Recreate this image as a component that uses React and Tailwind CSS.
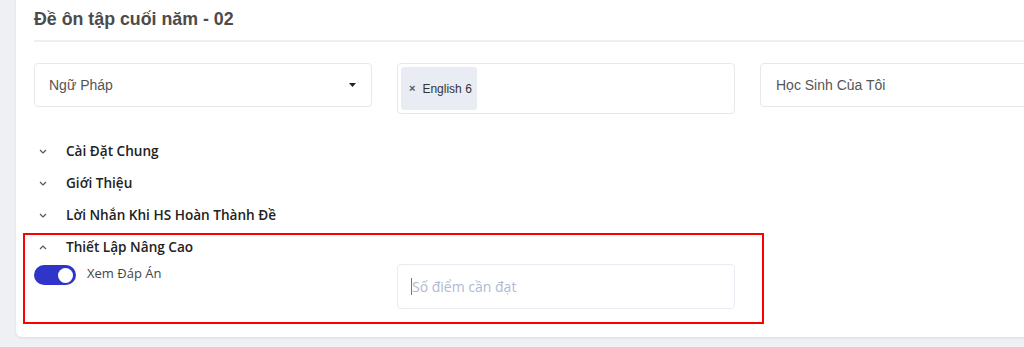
import { useState } from 'react';

const sections = ['Cài Đặt Chung', 'Giới Thiệu', 'Lời Nhắn Khi HS Hoàn Thành Đề'];

function Chevron({ up }) {
  return (
    <svg width="8" height="5" viewBox="0 0 8 5" className="ml-[5px]">
      <polyline
        points={up ? '1,4 4,1 7,4' : '1,1 4,4 7,1'}
        fill="none"
        stroke="#555"
        strokeWidth="1.2"
      />
    </svg>
  );
}

export default function App() {
  const [showAnswer, setShowAnswer] = useState(true);

  return (
    <div className="w-full h-[347px] overflow-hidden bg-[#eef0f4]">
      <div className="ml-4 w-[1040px] h-[337px] bg-white rounded-b-md shadow-[0_1px_3px_rgba(0,0,0,0.08)] pl-[18px]">
        {/* Header */}
        <h1 className="pt-[6px] h-[36px] leading-[26px] text-[17.8px] font-bold text-[#4b4b4b] font-['Liberation_Sans',Arial,sans-serif]">
          Đề ôn tập cuối năm - 02
        </h1>
        <div className="mt-[4px] h-[2px] bg-[#eceef2]" />

        {/* Filters */}
        <div className="mt-[21px] flex items-start gap-[25px] font-['Liberation_Sans',Arial,sans-serif] text-[14px] text-[#555]">
          <div className="shrink-0 w-[338px] h-[44px] border border-[#e6e8ee] rounded-[4px] flex items-center justify-between pl-[14px] pr-[15px]">
            <span>Ngữ Pháp</span>
            <svg width="7" height="4" viewBox="0 0 7 4">
              <polygon points="0,0 7,0 3.5,4" fill="#222" />
            </svg>
          </div>
          <div className="shrink-0 w-[338px] h-[51px] border border-[#e6e8ee] rounded-[4px] p-[3px]">
            <div className="h-[43px] w-[76px] bg-[#e9ecf2] rounded-[3px] flex items-center pl-[8px] gap-[7px] text-[12px] text-[#333]">
              <span className="text-[11px] font-bold text-[#555]">×</span>
              <span className="whitespace-nowrap">English 6</span>
            </div>
          </div>
          <div className="shrink-0 w-[320px] h-[44px] border border-[#e6e8ee] rounded-[4px] flex items-center pl-[15px]">
            <span>Học Sinh Của Tôi</span>
          </div>
        </div>

        {/* Accordion */}
        <div className="mt-[21px] font-['Open_Sans',sans-serif]">
          {sections.map((s) => (
            <div key={s} className="h-8 flex items-center">
              <span className="w-8 flex"><Chevron /></span>
              <span className="text-[13.6px] font-semibold text-[#222]">{s}</span>
            </div>
          ))}

          <div className="mt-[2px] -ml-[11px] w-[741px] h-[91px] border-2 border-[#ff0000] pl-[9px]">
            <div className="h-6 flex items-center">
              <span className="w-8 flex"><Chevron up /></span>
              <span className="text-[13.6px] font-semibold text-[#222]">Thiết Lập Nâng Cao</span>
            </div>
            <div className="mt-[5px] flex items-start">
              <div className="shrink-0 w-[363px] flex items-start">
                <button
                  onClick={() => setShowAnswer(!showAnswer)}
                  className={`mt-[1px] shrink-0 w-[42px] h-[20px] rounded-full flex items-center px-[3px] ${showAnswer ? 'bg-[#2e35c8] justify-end' : 'bg-gray-300 justify-start'}`}
                >
                  <span className="w-[15px] h-[15px] rounded-full bg-white" />
                </button>
                <span className="ml-[11px] whitespace-nowrap text-[13px] leading-[18px] text-[#444]">Xem Đáp Án</span>
              </div>
              <div className="shrink-0 w-[338px] h-[45px] border border-[#e8ebf1] rounded-[4px] flex items-center pl-[13px]">
                <span className="w-px h-[17px] bg-[#777]" />
                <span className="whitespace-nowrap text-[14px] text-[#b0bad2]">Số điểm cần đạt</span>
              </div>
            </div>
          </div>
        </div>
      </div>
    </div>
  );
}
